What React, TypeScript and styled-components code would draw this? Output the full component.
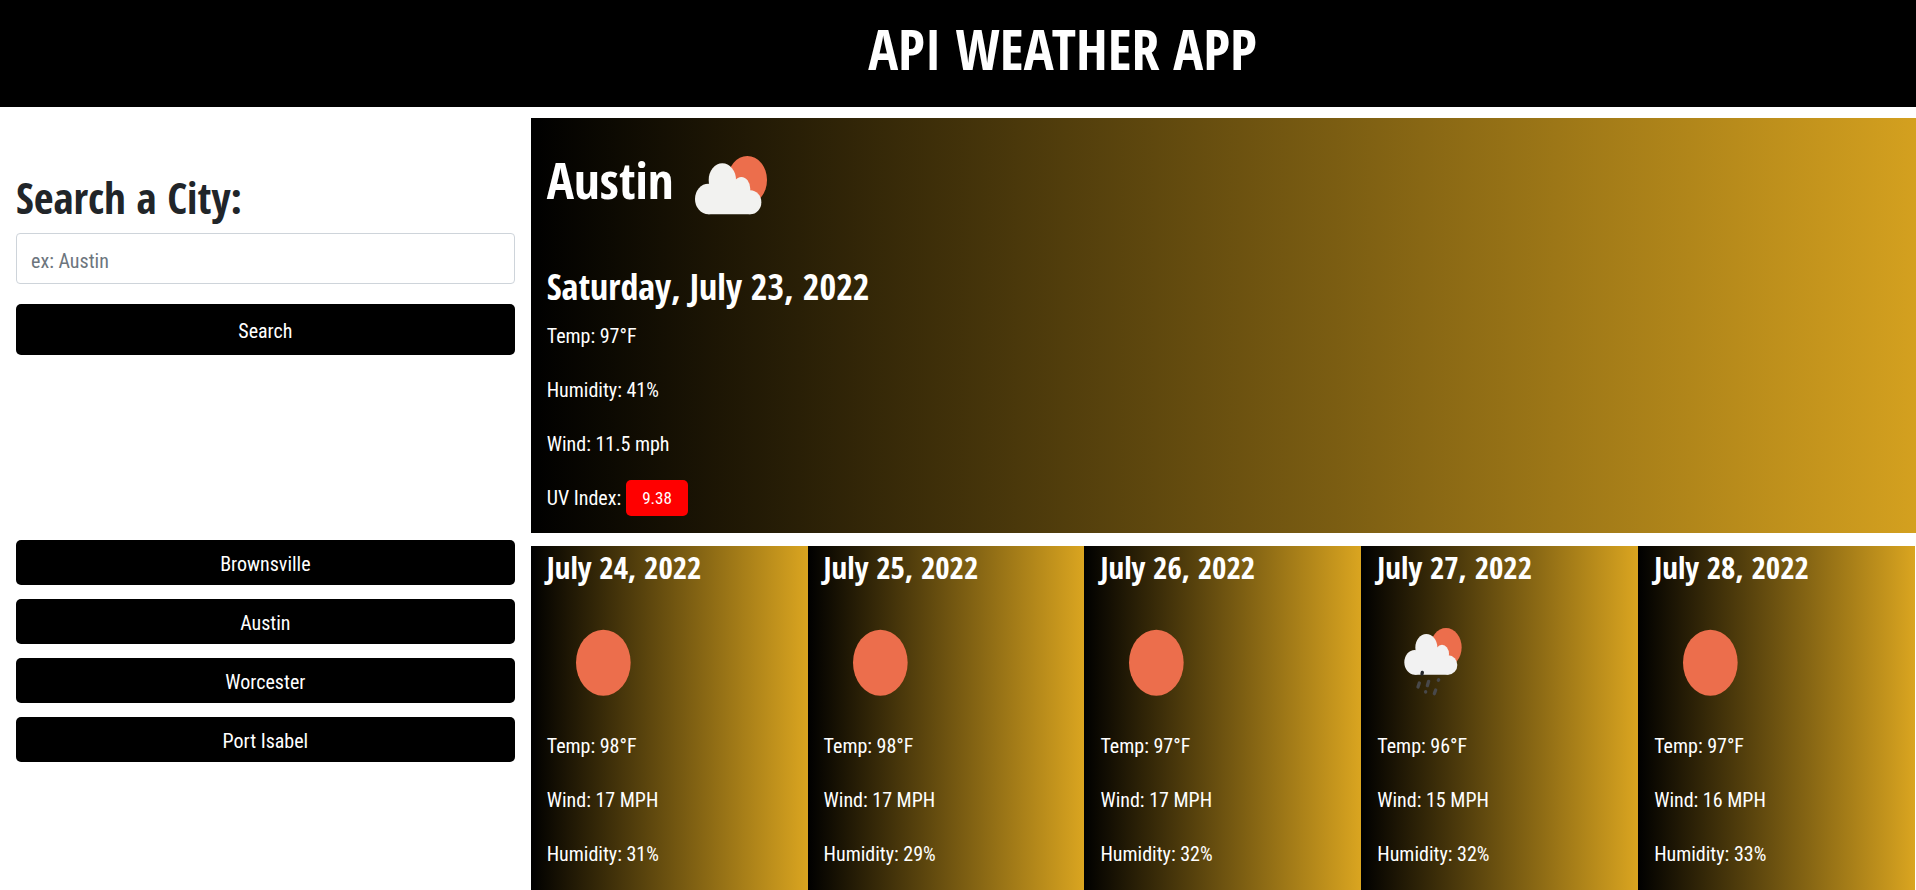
import React from "react";
import styled, { createGlobalStyle } from "styled-components";

const GlobalStyle = createGlobalStyle`
  *, *::before, *::after { box-sizing: border-box; }
  body {
    margin: 0;
    background: #fff;
    color: #212529;
    font-family: "Roboto Condensed", Roboto, "Open Sans", sans-serif;
    font-size: 20px;
    line-height: 30px;
    overflow: hidden;
  }
  h1, h2, h3, p { margin: 0; padding: 0; }
  h1, h2, h3, label { font-family: "Open Sans Condensed", "Open Sans", "Noto Sans", sans-serif; }
`;

const Page = styled.div`
  display: flex;
  flex-direction: column;
  height: 100vh;
  overflow: hidden;
`;

const Header = styled.header`
  flex: none;
  padding: 14px 0 25px 209px;
  background: #000;
  color: #fff;
  text-align: center;
`;

const Title = styled.h1`
  font-size: 56px;
  font-weight: 700;
  line-height: 68px;
`;

const Layout = styled.div`
  display: grid;
  grid-template-columns: 27.7% minmax(0, 1fr);
  flex: none;
`;

const Sidebar = styled.aside`
  padding: 64px 16px 0;
`;

const SearchForm = styled.form`
  display: flex;
  flex-direction: column;
`;

const SearchLabel = styled.label`
  margin-bottom: 9px;
  font-size: 43px;
  font-weight: 700;
  line-height: 53px;
`;

const SearchInput = styled.input`
  width: 100%;
  height: 51px;
  margin-bottom: 20px;
  padding: 4px 14px 0;
  border: 1px solid #ced4da;
  border-radius: 4px;
  background: #fff;
  color: #495057;
  font: inherit;
  &::placeholder { color: #6c757d; opacity: 1; }
`;

const DarkButton = styled.button<{ $tall?: boolean }>`
  display: block;
  width: 100%;
  height: ${(p) => (p.$tall ? 51 : 45)}px;
  padding: 2px 0 0;
  border: 0;
  border-radius: 5px;
  background: #000;
  color: #fff;
  font: inherit;
  cursor: pointer;
`;

const History = styled.div`
  display: flex;
  flex-direction: column;
  gap: 14px;
  margin-top: 185px;
`;

const Content = styled.main`
  display: flex;
  flex-direction: column;
  gap: 13px;
  min-width: 0;
  padding-top: 11px;
  color: #fff;
`;

const Today = styled.section`
  padding: 29px 16px 17px;
  background: linear-gradient(to right, #000, #daa520 103%);
`;

const CityLine = styled.div`
  display: flex;
  align-items: flex-start;
  gap: 21px;
  margin-bottom: 50px;
`;

const CityName = styled.h2`
  font-size: 51px;
  font-weight: 600;
  line-height: 64px;
`;

const CityIcon = styled.svg`
  display: block;
  flex: none;
  width: 72px;
  height: 59px;
  margin-top: 9px;
`;

const TodayDate = styled.h3`
  margin-bottom: 12px;
  font-size: 36px;
  font-weight: 600;
  line-height: 44px;
`;

const Facts = styled.div`
  display: flex;
  flex-direction: column;
  gap: 24px;
`;

const UvLine = styled.p`
  display: flex;
  align-items: center;
  gap: 5px;
  height: 36px;
  margin-top: -3px;
`;

const UvBadge = styled.span`
  padding: 3px 16px;
  border-radius: 5px;
  background: #f00;
  font-size: 17px;
`;

const Forecast = styled.section`
  display: grid;
  grid-template-columns: repeat(5, 1fr);
  padding-right: 1px;
`;

const DayCard = styled.article`
  min-height: 345px;
  padding: 0 16px 16px;
  background: linear-gradient(to right, #000, #daa520);
`;

const DayDate = styled.h3`
  margin-bottom: 8px;
  font-size: 31px;
  font-weight: 600;
  line-height: 42px;
`;

const DayIcon = styled.svg`
  display: block;
  width: 112px;
  height: 132px;
  margin-bottom: 3px;
`;

function PartlyCloudy() {
  return (
    <CityIcon viewBox="528 168 216 177" role="img" aria-label="Partly cloudy">
      <ellipse cx="685" cy="240" rx="59" ry="72" fill="#ec6e4c" />
      <g fill="#f2f2f0">
        <ellipse cx="568" cy="297" rx="40" ry="46" />
        <ellipse cx="610" cy="240" rx="41" ry="50" />
        <ellipse cx="667" cy="267" rx="27" ry="36" />
        <ellipse cx="694" cy="307" rx="33" ry="36" />
        <path d="M568 343V260l30-20h52l20 40 24 10v53z" />
      </g>
    </CityIcon>
  );
}

function Sun() {
  return (
    <DayIcon viewBox="-9 -12 336 396" role="img" aria-label="Clear sky">
      <ellipse cx="160" cy="188" rx="82" ry="99" fill="#ec6e4c" />
    </DayIcon>
  );
}

function SunShower() {
  return (
    <DayIcon viewBox="-9 -12 336 396" role="img" aria-label="Rain">
      <ellipse cx="198" cy="142" rx="47" ry="58" fill="#ec6e4c" />
      <g fill="#f2f2f2">
        <ellipse cx="104" cy="187" rx="31" ry="37" />
        <ellipse cx="139" cy="142" rx="33" ry="40" />
        <ellipse cx="186" cy="162" rx="21" ry="28" />
        <ellipse cx="205" cy="195" rx="27" ry="29" />
        <path d="M104 224V160l25-18h42l18 30 16 10v42z" />
      </g>
      <g stroke="#48484a" strokeWidth="10" strokeLinecap="round" fill="none">
        <path d="M127 217l-1 5" stroke="#26282c" />
        <path d="M118 249l-4 12M146 244l-4 13M176 239l-1 2M137 275l0 1M167 270l-4 11" />
      </g>
    </DayIcon>
  );
}

const cities = ["Brownsville", "Austin", "Worcester", "Port Isabel"];

const days = [
  { date: "July 24, 2022", icon: "sun", temp: 98, wind: 17, humidity: 31 },
  { date: "July 25, 2022", icon: "sun", temp: 98, wind: 17, humidity: 29 },
  { date: "July 26, 2022", icon: "sun", temp: 97, wind: 17, humidity: 32 },
  { date: "July 27, 2022", icon: "rain", temp: 96, wind: 15, humidity: 32 },
  { date: "July 28, 2022", icon: "sun", temp: 97, wind: 16, humidity: 33 },
];

export default function App() {
  return (
    <Page>
      <GlobalStyle />
      <Header>
        <Title>API WEATHER APP</Title>
      </Header>
      <Layout>
        <Sidebar>
          <SearchForm onSubmit={(e) => e.preventDefault()}>
            <SearchLabel htmlFor="city">Search a City:</SearchLabel>
            <SearchInput id="city" type="text" placeholder="ex: Austin" />
            <DarkButton type="submit" $tall>Search</DarkButton>
          </SearchForm>
          <History>
            {cities.map((city) => (
              <DarkButton key={city} type="button">{city}</DarkButton>
            ))}
          </History>
        </Sidebar>
        <Content>
          <Today>
            <CityLine>
              <CityName>Austin</CityName>
              <PartlyCloudy />
            </CityLine>
            <TodayDate>Saturday, July 23, 2022</TodayDate>
            <Facts>
              <p>Temp: 97°F</p>
              <p>Humidity: 41%</p>
              <p>Wind: 11.5 mph</p>
              <UvLine>UV Index: <UvBadge>9.38</UvBadge></UvLine>
            </Facts>
          </Today>
          <Forecast>
            {days.map((day) => (
              <DayCard key={day.date}>
                <DayDate>{day.date}</DayDate>
                {day.icon === "sun" ? <Sun /> : <SunShower />}
                <Facts>
                  <p>Temp: {day.temp}°F</p>
                  <p>Wind: {day.wind} MPH</p>
                  <p>Humidity: {day.humidity}%</p>
                </Facts>
              </DayCard>
            ))}
          </Forecast>
        </Content>
      </Layout>
    </Page>
  );
}
